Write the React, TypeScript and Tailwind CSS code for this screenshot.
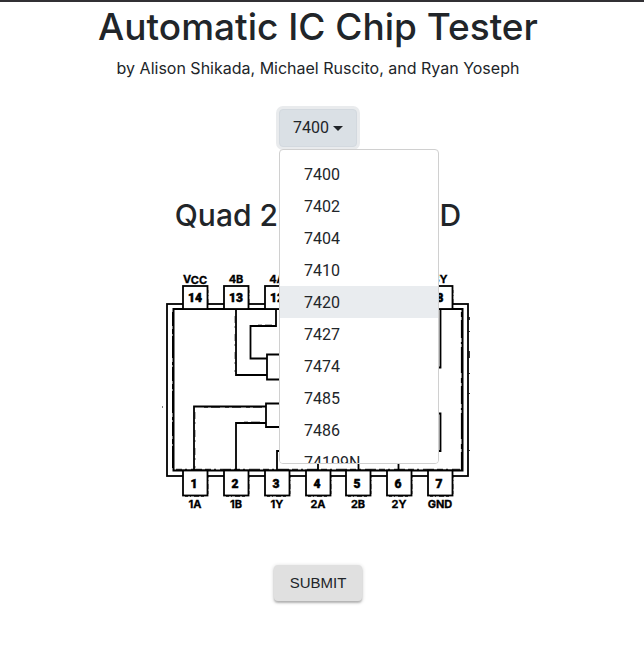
import React, { useState } from "react";

const chips = ["7400", "7402", "7404", "7410", "7420", "7427", "7474", "7485", "7486", "74109N"];

const topPins = [
  { n: "14", label: "" },
  { n: "13", label: "4B" },
  { n: "12", label: "4A" },
  { n: "11", label: "4Y" },
  { n: "10", label: "3B" },
  { n: "9", label: "3A" },
  { n: "8", label: "3Y" },
];
const bottomPins = ["1A", "1B", "1Y", "2A", "2B", "2Y", "GND"];
const pinX = [195, 236, 277, 318, 358, 399, 440];

function ChipDiagram() {
  return (
    <svg
      viewBox="158 266 320 250"
      className="h-[250px] w-[320px] max-w-full"
      role="img"
      aria-label="7400 pin diagram"
      fill="none"
      stroke="#000"
      strokeWidth="1.8"
    >
      {/* package outline */}
      <rect x="167" y="304" width="301" height="172" strokeWidth="1.8" />
      <rect x="173.5" y="309" width="289" height="161.5" strokeWidth="2" />
      <path d="M172.5 312V470" strokeWidth="1" strokeDasharray="14 3 5 2 22 4 3 2" />
      <path d="M461.5 312V470" strokeWidth="1.2" strokeDasharray="5 3 18 4 2 3 26 5" />
      <path d="M469.3 317v3M469.3 331v1M469.3 351v7M469.3 373v1M469.3 393v1M469.3 450v1" strokeWidth="1" />
      <path d="M176 469.3H460" strokeWidth="1" strokeDasharray="6 3 2 4 11 3" />
      <path d="M162 407h1" strokeWidth="1" />

      {/* wires */}
      <path d="M236 309V375H267" />
      <path d="M276 309V326H250.500V358.500H267" />
      <path d="M194 470V406.500H266" />
      <path d="M236 470V423H266" />
      <path d="M277 470V451H300" />
      <path d="M318 470V440M358.500 470V440M398.500 470V440" />
      <path d="M424 367.500H440.500V309M424 413.500H440.500V451H424" />
      <path d="M235 316V372M195 412V468" strokeWidth="0.6" strokeDasharray="7 3 2 6" />
      <path d="M258 325H272M204 407.500H262M244 422H262" strokeWidth="0.6" strokeDasharray="4 3 9 5" />

      {/* gates */}
      <path d="M300 354.500H267V379.500H300M300 403.500H266V427H300" />
      <path d="M300 354.500a12.500 12.500 0 0 1 0 25M300 403.500a12 12 0 0 1 0 23.500" />

      {/* pins */}
      {pinX.map((x) => (
        <g key={x}>
          <rect x={x - 12} y="286" width="24.500" height="23" fill="#fff" />
          <rect x={x - 12} y="470.500" width="24.500" height="25" fill="#fff" />
          <path
            d={`M${x + 13} 290V306M${x + 13} 475V494M${x - 10} 496.500H${x + 11}`}
            strokeWidth="0.7"
            strokeDasharray="3 2 1 3 5 2"
          />
        </g>
      ))}

      {/* numbers and signal names */}
      <g
        fill="#000"
        stroke="#000"
        strokeWidth="0.3"
        textAnchor="middle"
        className="font-['Inter','Liberation_Sans',sans-serif] text-[11px] font-bold"
      >
        {topPins.map((p, i) => (
          <React.Fragment key={p.n}>
            <text x={pinX[i]} y="302" className="font-['Roboto',sans-serif] text-[12px] font-black" strokeWidth="0.5">
              {p.n}
            </text>
            <text x={pinX[i]} y="283">{p.label}</text>
          </React.Fragment>
        ))}
        <text x="195" y="283">
          V<tspan dy="1">CC</tspan>
        </text>
        {bottomPins.map((label, i) => (
          <React.Fragment key={label}>
            <text x={pinX[i] - 1} y="488" className="font-['Roboto',sans-serif] text-[12px] font-black" strokeWidth="0.5">
              {i + 1}
            </text>
            <text x={pinX[i]} y="508">{label}</text>
          </React.Fragment>
        ))}
      </g>
    </svg>
  );
}

export default function App() {
  const [selected, setSelected] = useState("7400");
  const [open, setOpen] = useState(true);

  return (
    <div className="border-t-2 border-[#313034] bg-white pr-2 pb-11 font-['Inter','Liberation_Sans',sans-serif] text-[#212529]">
      <main className="flex flex-col items-center text-center">
        <h1 className="text-[37px] leading-[50px] font-medium">Automatic IC Chip Tester</h1>
        <p className="mt-1 text-base leading-6">
          by Alison Shikada, Michael Ruscito, and Ryan Yoseph
        </p>

        <div className="relative mt-[29px] font-['Roboto','Liberation_Sans',sans-serif]">
          <button
            type="button"
            aria-haspopup="menu"
            aria-expanded={open}
            onClick={() => setOpen(!open)}
            className="flex h-[38px] w-[78px] items-center justify-center gap-1 rounded border border-[#d3d9df] bg-[#dae0e5] text-base ring-3 ring-[#e9ebed]"
          >
            {selected}
            <span className="border-x-5 border-t-5 border-x-transparent border-t-[#212529]" />
          </button>
          {open && (
            <div
              role="menu"
              className="absolute top-10 left-0 z-10 h-[315px] w-40 overflow-hidden rounded border border-[#d0d0d0] bg-white py-2"
            >
              {chips.map((chip) => (
                <button
                  key={chip}
                  type="button"
                  role="menuitem"
                  onClick={() => {
                    setSelected(chip);
                    setOpen(false);
                  }}
                  className={`block h-8 w-full px-6 pt-0.5 text-left text-base ${chip === "7420" ? "bg-[#e9ecef]" : "bg-white"}`}
                >
                  {chip}
                </button>
              ))}
            </div>
          )}
        </div>

        <h2 className="mt-12 mb-[31px] text-[30px] leading-10 font-medium">Quad 2-Input NAND</h2>
        <ChipDiagram />
        <button
          type="button"
          className="mt-[49px] h-9 w-[88px] rounded bg-[#e0e0e0] font-['Liberation_Sans',Arial,sans-serif] text-[15px] shadow-[0_2px_2px_rgba(0,0,0,0.2),0_1px_4px_rgba(0,0,0,0.2)]"
        >
          SUBMIT
        </button>
      </main>
    </div>
  );
}
